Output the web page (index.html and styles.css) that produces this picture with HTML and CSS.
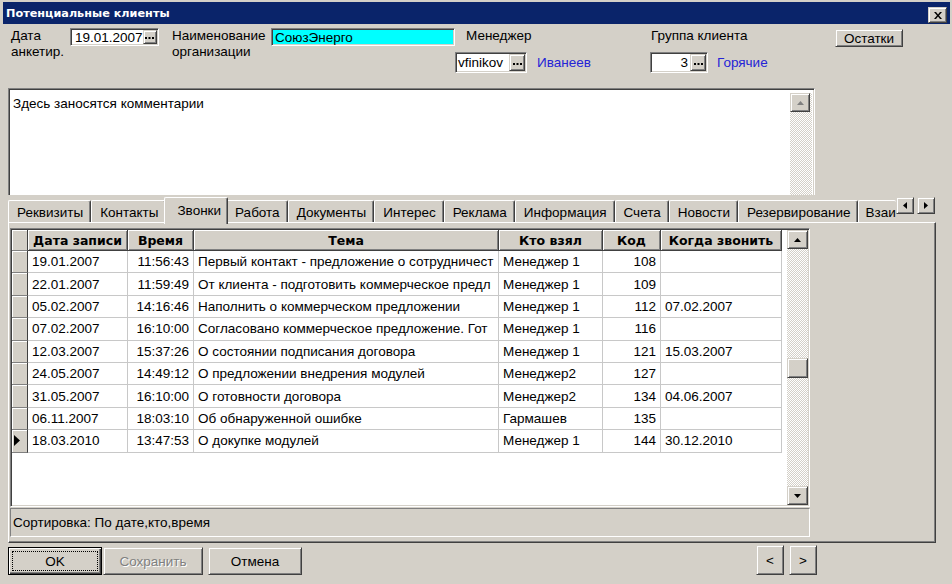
FILE: index.html
```html
<!DOCTYPE html>
<html lang="ru">
<head>
<meta charset="utf-8">
<title>Потенциальные клиенты</title>
<link rel="stylesheet" href="styles.css">
</head>
<body>
<div class="window">
  <div class="titlebar">
    <span class="title">Потенциальные клиенты</span>
    <span class="close raised"><svg width="8" height="7" viewBox="0 0 8 7"><path d="M0 0h2l2 2.4L6 0h2L5 3.5 8 7H6L4 4.6 2 7H0l3-3.5z"/></svg></span>
  </div>

  <div class="form-row">
    <div class="lbl lbl-date">Дата<br>анкетир.</div>
    <div class="edit edit-date"><span class="val">19.01.2007</span><span class="ellip raised"><svg width="9" height="2" viewBox="0 0 9 2"><path d="M0 0h2v2H0zM3.5 0h2v2h-2zM7 0h2v2H7z"/></svg></span></div>
    <div class="lbl lbl-org">Наименование<br>организации</div>
    <div class="edit edit-org">СоюзЭнерго</div>
    <div class="field field-mgr">
      <div class="lbl">Менеджер</div>
      <div class="field-line">
        <div class="edit edit-mgr"><span class="val">vfinikov</span><span class="ellip raised"><svg width="9" height="2" viewBox="0 0 9 2"><path d="M0 0h2v2H0zM3.5 0h2v2h-2zM7 0h2v2H7z"/></svg></span></div>
        <span class="link">Иванеев</span>
      </div>
    </div>
    <div class="field field-grp">
      <div class="lbl">Группа клиента</div>
      <div class="field-line">
        <div class="edit edit-grp"><span class="val num">3</span><span class="ellip raised"><svg width="9" height="2" viewBox="0 0 9 2"><path d="M0 0h2v2H0zM3.5 0h2v2h-2zM7 0h2v2H7z"/></svg></span></div>
        <span class="link">Горячие</span>
      </div>
    </div>
    <button class="btn btn-ost">Остатки</button>
  </div>

  <div class="memo">
    <div class="memo-text">Здесь заносятся комментарии</div>
    <div class="memo-scroll">
      <span class="sb-btn raised"><svg width="7" height="4" viewBox="0 0 7 4"><path d="M3.5 0 7 4H0z" fill="#808080"/></svg></span>
    </div>
  </div>

  <div class="tabs">
    <div class="tabstrip">
      <span class="tab">Реквизиты</span>
      <span class="tab">Контакты</span>
      <span class="tab active">Звонки</span>
      <span class="tab">Работа</span>
      <span class="tab">Документы</span>
      <span class="tab">Интерес</span>
      <span class="tab">Реклама</span>
      <span class="tab">Информация</span>
      <span class="tab">Счета</span>
      <span class="tab">Новости</span>
      <span class="tab">Резервирование</span>
      <span class="tab tab-cut">Взаи</span>
    </div>
    <span class="tab-arrow raised"><svg width="4" height="7" viewBox="0 0 4 7"><path d="M4 0v7L0 3.5z"/></svg></span>
    <span class="tab-arrow raised"><svg width="4" height="7" viewBox="0 0 4 7"><path d="M0 0v7l4-3.5z"/></svg></span>
  </div>

  <div class="page">
    <div class="grid">
      <div class="grid-body">
        <table class="tbl">
          <colgroup>
            <col class="c-ind"><col class="c-date"><col class="c-time"><col class="c-topic"><col class="c-who"><col class="c-code"><col class="c-when">
          </colgroup>
          <thead>
            <tr><th class="ind"></th><th>Дата записи</th><th>Время</th><th>Тема</th><th>Кто взял</th><th>Код</th><th>Когда звонить</th></tr>
          </thead>
          <tbody>
            <tr><td class="ind"></td><td>19.01.2007</td><td class="r">11:56:43</td><td>Первый контакт - предложение о сотрудничест</td><td>Менеджер 1</td><td class="r">108</td><td></td></tr>
            <tr><td class="ind"></td><td>22.01.2007</td><td class="r">11:59:49</td><td>От клиента - подготовить коммерческое предл</td><td>Менеджер 1</td><td class="r">109</td><td></td></tr>
            <tr><td class="ind"></td><td>05.02.2007</td><td class="r">14:16:46</td><td>Наполнить о коммерческом предложении</td><td>Менеджер 1</td><td class="r">112</td><td>07.02.2007</td></tr>
            <tr><td class="ind"></td><td>07.02.2007</td><td class="r">16:10:00</td><td>Согласовано коммерческое предложение. Гот</td><td>Менеджер 1</td><td class="r">116</td><td></td></tr>
            <tr><td class="ind"></td><td>12.03.2007</td><td class="r">15:37:26</td><td>О состоянии подписания договора</td><td>Менеджер 1</td><td class="r">121</td><td>15.03.2007</td></tr>
            <tr><td class="ind"></td><td>24.05.2007</td><td class="r">14:49:12</td><td>О предложении внедрения модулей</td><td>Менеджер2</td><td class="r">127</td><td></td></tr>
            <tr><td class="ind"></td><td>31.05.2007</td><td class="r">16:10:00</td><td>О готовности договора</td><td>Менеджер2</td><td class="r">134</td><td>04.06.2007</td></tr>
            <tr><td class="ind"></td><td>06.11.2007</td><td class="r">18:03:10</td><td>Об обнаруженной ошибке</td><td>Гармашев</td><td class="r">135</td><td></td></tr>
            <tr><td class="ind cur"><svg width="6" height="11" viewBox="0 0 6 11"><path d="M0 0l6 5.5L0 11z"/></svg></td><td>18.03.2010</td><td class="r">13:47:53</td><td>О докупке модулей</td><td>Менеджер 1</td><td class="r">144</td><td>30.12.2010</td></tr>
          </tbody>
        </table>
      </div>
      <div class="grid-scroll">
        <span class="sb-btn raised"><svg width="7" height="4" viewBox="0 0 7 4"><path d="M3.5 0 7 4H0z"/></svg></span>
        <span class="sb-gap"></span>
        <span class="sb-thumb raised"></span>
        <span class="sb-fill"></span>
        <span class="sb-btn raised"><svg width="7" height="4" viewBox="0 0 7 4"><path d="M0 0h7L3.5 4z"/></svg></span>
      </div>
    </div>
    <div class="status">Сортировка: По дате,кто,время</div>
  </div>

  <div class="buttons">
    <button class="btn btn-ok"><span class="focus">OK</span></button>
    <button class="btn btn-save" disabled>Сохранить</button>
    <button class="btn btn-cancel">Отмена</button>
    <button class="btn btn-nav btn-prev">&lt;</button>
    <button class="btn btn-nav btn-next">&gt;</button>
  </div>
</div>
</body>
</html>
```

FILE: styles.css
```css
* { box-sizing: border-box; }

html, body {
  margin: 0;
  padding: 0;
}

body {
  width: 952px;
  height: 584px;
  overflow: hidden;
  background: #d4d0c8;
  font-family: "Liberation Sans", Arial, sans-serif;
  font-size: 13.5px;
  color: #000;
}

button {
  font: inherit;
  color: inherit;
  margin: 0;
  padding: 0;
}

svg { display: block; }

.raised {
  background: #d4d0c8;
  border: 1px solid;
  border-color: #d4d0c8 #404040 #404040 #d4d0c8;
  box-shadow: inset 1px 1px #fff, inset -1px -1px #808080;
}

.window {
  width: 952px;
  height: 584px;
  padding: 2px 2px 0 3px;
  display: flex;
  flex-direction: column;
  background: #d4d0c8;
}

/* title bar */
.titlebar {
  height: 22px;
  flex: none;
  background: #0a246a;
  color: #fff;
  display: flex;
  align-items: center;
  justify-content: space-between;
  padding: 0 3px;
}

.title {
  font-family: "DejaVu Sans", Verdana, sans-serif;
  font-weight: bold;
  font-size: 11.25px;
}

.close {
  width: 19px;
  height: 16px;
  margin-top: 4px;
  display: flex;
  align-items: center;
  justify-content: center;
}

/* top form */
.form-row {
  height: 64px;
  flex: none;
  display: flex;
  align-items: flex-start;
  padding-top: 4px;
}

.lbl {
  line-height: 16px;
  white-space: nowrap;
}

.lbl-date {
  margin-left: 8px;
  width: 59px;
}

.lbl-org {
  margin-left: 13px;
  width: 99px;
}

.edit {
  height: 18px;
  background: #fff;
  border: 1px solid;
  border-color: #808080 #fff #fff #808080;
  box-shadow: inset 1px 1px #404040, inset -1px -1px #d4d0c8;
  display: flex;
  align-items: center;
  padding: 1px 1px 1px 4px;
  white-space: nowrap;
}

.edit-date { width: 89px; }

.edit-org {
  width: 184px;
  background: #00ffff;
  padding-left: 3px;
}

.ellip {
  margin-left: auto;
  width: 16px;
  height: 100%;
  display: flex;
  align-items: center;
  justify-content: center;
  padding-top: 2px;
}

.field {
  display: flex;
  flex-direction: column;
}

.field-mgr { width: 195px; }
.field-mgr > .lbl { padding-left: 11px; }

.field-grp { width: 185px; }
.field-grp > .lbl { padding-left: 1px; }

.field-line {
  margin-top: 8px;
  display: flex;
  align-items: center;
}

.edit-mgr {
  width: 72px;
  height: 21px;
  padding-left: 2px;
}

.edit-grp {
  width: 58px;
  height: 21px;
}

.edit-grp .num {
  margin-left: auto;
  margin-right: 2px;
}

.edit-grp .ellip { margin-left: 0; }

.link {
  color: #2424d6;
  margin-left: 10px;
}

.field-grp .link { margin-left: 9px; }

.btn {
  background: #d4d0c8;
  border: 1px solid;
  border-color: #d4d0c8 #404040 #404040 #d4d0c8;
  box-shadow: inset 1px 1px #fff, inset -1px -1px #808080;
  display: flex;
  align-items: center;
  justify-content: center;
  white-space: nowrap;
}

.btn-ost {
  width: 68px;
  height: 18px;
  margin-top: 1px;
}

/* memo */
.memo {
  flex: none;
  margin-left: 5px;
  width: 807px;
  height: 107px;
  background: #fff;
  border-top: 1px solid #808080;
  border-left: 1px solid #808080;
  border-right: 1px solid #fff;
  box-shadow: inset 1px 1px #404040, inset -1px 0 #d4d0c8;
  display: flex;
}

.memo-text {
  flex: 1;
  padding: 7px 0 0 4px;
  line-height: 16px;
}

.memo-scroll {
  width: 22px;
  margin: 4px 2px 0 0;
  background: repeating-conic-gradient(#fff 0 25%, #d4d0c8 0 50%) 0 0 / 2px 2px;
}

.sb-btn {
  width: 20px;
  height: 19px;
  flex: none;
  display: flex;
  align-items: center;
  justify-content: center;
}

/* tabs */
.tabs {
  flex: none;
  margin-top: 2px;
  height: 27px;
  padding-left: 5px;
  display: flex;
  align-items: flex-start;
  position: relative;
  z-index: 1;
}

.tabstrip {
  width: 888px;
  height: 27px;
  overflow: hidden;
  display: flex;
  align-items: flex-start;
  padding-top: 3px;
}

.tab {
  flex: none;
  height: 22px;
  padding: 4px 7px 0 8px;
  line-height: 16px;
  border-top: 1px solid #fff;
  border-left: 1px solid #fff;
  border-right: 1px solid #404040;
  box-shadow: inset -1px 0 #808080;
  border-radius: 2px 2px 0 0;
  white-space: nowrap;
  background: #d4d0c8;
}

.tab.active {
  position: relative;
  z-index: 2;
  height: 27px;
  margin: -3px -2px 0;
  padding: 5px 6px 0 12px;
}

.tab-cut {
  padding: 4px 0 0 6px;
  border-right: none;
  box-shadow: none;
}

.tab-arrow {
  width: 18px;
  height: 17px;
  display: flex;
  align-items: center;
  justify-content: center;
}

.tab-arrow + .tab-arrow { margin-left: 3px; }

/* page */
.page {
  flex: none;
  margin: -2px 0 0 5px;
  width: 928px;
  height: 321px;
  border-top: 1px solid #fff;
  border-left: 1px solid #fff;
  border-right: 1px solid #404040;
  border-bottom: 1px solid #404040;
  box-shadow: inset -1px -1px #808080;
  padding: 5px 0 0 1px;
}

.grid {
  width: 800px;
  height: 279px;
  background: #fff;
  border: 1px solid;
  border-color: #808080 #fff #fff #808080;
  box-shadow: inset 1px 1px #404040, inset -1px -1px #d4d0c8;
  padding: 1px;
  display: flex;
}

.grid-body {
  width: 775px;
  overflow: hidden;
}

.tbl {
  table-layout: fixed;
  width: 770px;
  border-collapse: separate;
  border-spacing: 0;
}

.c-ind { width: 16px; }
.c-date { width: 100px; }
.c-time { width: 66px; }
.c-topic { width: 305px; }
.c-who { width: 104px; }
.c-code { width: 58px; }
.c-when { width: 121px; }

.tbl th {
  height: 21px;
  padding: 0 2px;
  font-family: "DejaVu Sans", Verdana, sans-serif;
  font-weight: bold;
  font-size: 12.5px;
  text-align: center;
  white-space: nowrap;
  overflow: hidden;
  background: #d4d0c8;
  border-right: 1px solid #404040;
  border-bottom: 1px solid #404040;
  box-shadow: inset 1px 1px #fff, inset -1px -1px #808080;
}

.tbl td {
  height: 22.4px;
  padding: 0 3px 0 4px;
  white-space: nowrap;
  overflow: hidden;
  border-right: 1px solid #c8c8c8;
  border-bottom: 1px solid #c8c8c8;
}

.tbl td.r {
  text-align: right;
  padding: 0 4px 0 2px;
}

.tbl .ind {
  padding: 0;
  background: #d4d0c8;
  border-right: 1px solid #404040;
  border-bottom: 1px solid #808080;
  box-shadow: inset 1px 1px #fff;
}

.tbl td.cur svg { margin-left: 2px; }

.grid-scroll {
  width: 21px;
  display: flex;
  flex-direction: column;
  margin-left: auto;
  background: repeating-conic-gradient(#fff 0 25%, #d4d0c8 0 50%) 0 0 / 2px 2px;
}

.grid-scroll .sb-btn { width: 21px; }

.sb-gap { height: 109px; flex: none; }

.sb-thumb {
  height: 20px;
  flex: none;
}

.sb-fill { flex: 1; }

.status {
  margin-top: 1px;
  width: 800px;
  height: 29px;
  border-top: 1px solid #808080;
  border-left: 1px solid #808080;
  border-right: 1px solid #fff;
  border-bottom: 1px solid #fff;
  padding: 6px 0 0 2px;
  line-height: 16px;
}

/* bottom buttons */
.buttons {
  flex: none;
  margin-top: 2px;
  height: 30px;
  padding-left: 5px;
  display: flex;
  align-items: flex-end;
}

.btn-ok {
  width: 94px;
  height: 28px;
  border: 1px solid #000;
  box-shadow: inset 1px 1px #fff, inset -1px -1px #404040, inset -2px -2px #808080;
  padding: 3px;
}

.btn-ok .focus {
  width: 100%;
  height: 100%;
  border: 1px dotted #000;
  display: flex;
  align-items: center;
  justify-content: center;
}

.btn-save {
  margin-left: 1px;
  width: 100px;
  height: 28px;
  color: #808080;
  text-shadow: 1px 1px #fff;
}

.btn-cancel {
  margin-left: 5px;
  width: 94px;
  height: 28px;
}

.btn-nav {
  width: 28px;
  height: 30px;
}

.btn-prev { margin-left: 454px; }
.btn-next { margin-left: 5px; }
```
